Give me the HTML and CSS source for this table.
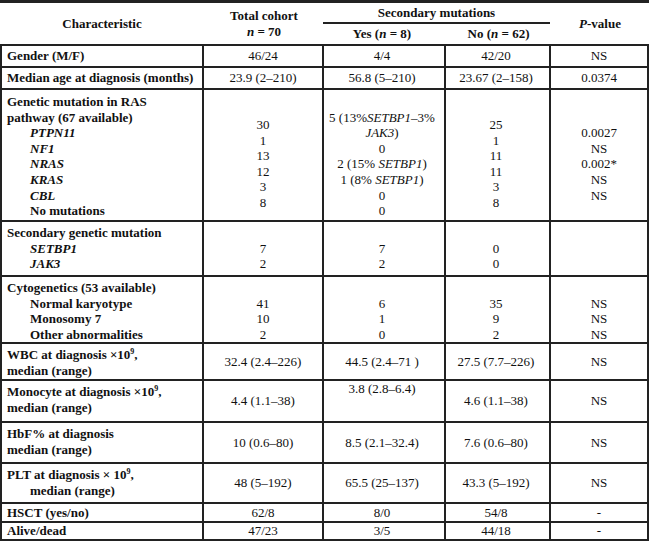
FILE: index.html
```html
<!DOCTYPE html>
<html lang="en">
<head>
<meta charset="utf-8">
<title>Patient characteristics</title>
<link rel="stylesheet" href="styles.css">
</head>
<body>
<div class="tbl">
  <div class="hd h-char"><div>Characteristic</div></div>
  <div class="hd h-total"><div>Total cohort</div><div><i>n</i> = 70</div></div>
  <div class="hd h-sec"><div>Secondary mutations</div></div>
  <div class="hd h-p"><div><i>P</i>-value</div></div>
  <div class="hd h-yes"><div>Yes (<i>n</i> = 8)</div></div>
  <div class="hd h-no"><div>No (<i>n</i> = 62)</div></div>

  <div class="cell lab">Gender (M/F)</div>
  <div class="cell">46/24</div>
  <div class="cell c3">4/4</div>
  <div class="cell c4">42/20</div>
  <div class="cell">NS</div>

  <div class="cell lab">Median age at diagnosis (months)</div>
  <div class="cell">23.9 (2–210)</div>
  <div class="cell c3">56.8 (5–210)</div>
  <div class="cell c4">23.67 (2–158)</div>
  <div class="cell">0.0374</div>

  <div class="cell lab top pt4">
    <div>Genetic mutation in RAS</div>
    <div>pathway (67 available)</div>
    <div class="ind"><i>PTPN11</i></div>
    <div class="ind"><i>NF1</i></div>
    <div class="ind"><i>NRAS</i></div>
    <div class="ind"><i>KRAS</i></div>
    <div class="ind"><i>CBL</i></div>
    <div class="ind">No mutations</div>
  </div>
  <div class="cell top pt27"><div>30</div><div>1</div><div>13</div><div>12</div><div>3</div><div>8</div></div>
  <div class="cell c3 top pt20"><div>5 (13%<i>SETBP1</i>–3%</div><div><i>JAK3</i>)</div><div>0</div><div>2 (15% <i>SETBP1</i>)</div><div>1 (8% <i>SETBP1</i>)</div><div>0</div><div>0</div></div>
  <div class="cell c4 top pt27"><div>25</div><div>1</div><div>11</div><div>11</div><div>3</div><div>8</div></div>
  <div class="cell top pt35"><div>0.0027</div><div>NS</div><div>0.002*</div><div>NS</div><div>NS</div></div>

  <div class="cell lab top pt3">
    <div>Secondary genetic mutation</div>
    <div class="ind"><i>SETBP1</i></div>
    <div class="ind"><i>JAK3</i></div>
  </div>
  <div class="cell top pt19"><div>7</div><div>2</div></div>
  <div class="cell c3 top pt19"><div>7</div><div>2</div></div>
  <div class="cell c4 top pt19"><div>0</div><div>0</div></div>
  <div class="cell"></div>

  <div class="cell lab top pt3">
    <div>Cytogenetics (53 available)</div>
    <div class="ind">Normal karyotype</div>
    <div class="ind">Monosomy 7</div>
    <div class="ind">Other abnormalities</div>
  </div>
  <div class="cell top pt19"><div>41</div><div>10</div><div>2</div></div>
  <div class="cell c3 top pt19"><div>6</div><div>1</div><div>0</div></div>
  <div class="cell c4 top pt19"><div>35</div><div>9</div><div>2</div></div>
  <div class="cell top pt19"><div>NS</div><div>NS</div><div>NS</div></div>

  <div class="cell lab top pt3 two">
    <div>WBC at diagnosis ×10<sup class="sup">9</sup>,</div>
    <div>median (range)</div>
  </div>
  <div class="cell">32.4 (2.4–226)</div>
  <div class="cell c3">44.5 (2.4–71 )</div>
  <div class="cell c4">27.5 (7.7–226)</div>
  <div class="cell">NS</div>

  <div class="cell lab top pt3 two">
    <div>Monocyte at diagnosis ×10<sup class="sup">9</sup>,</div>
    <div>median (range)</div>
  </div>
  <div class="cell">4.4 (1.1–38)</div>
  <div class="cell c3 top pt0">3.8 (2.8–6.4)</div>
  <div class="cell c4">4.6 (1.1–38)</div>
  <div class="cell">NS</div>

  <div class="cell lab top pt3 two">
    <div>HbF% at diagnosis</div>
    <div>median (range)</div>
  </div>
  <div class="cell">10 (0.6–80)</div>
  <div class="cell c3">8.5 (2.1–32.4)</div>
  <div class="cell c4">7.6 (0.6–80)</div>
  <div class="cell">NS</div>

  <div class="cell lab top pt3 two">
    <div>PLT at diagnosis × 10<sup class="sup">9</sup>,</div>
    <div class="ind">median (range)</div>
  </div>
  <div class="cell">48 (5–192)</div>
  <div class="cell c3">65.5 (25–137)</div>
  <div class="cell c4">43.3 (5–192)</div>
  <div class="cell">NS</div>

  <div class="cell lab">HSCT (yes/no)</div>
  <div class="cell">62/8</div>
  <div class="cell c3">8/0</div>
  <div class="cell c4">54/8</div>
  <div class="cell">-</div>

  <div class="cell lab">Alive/dead</div>
  <div class="cell">47/23</div>
  <div class="cell c3">3/5</div>
  <div class="cell c4">44/18</div>
  <div class="cell">-</div>
</div>
</body>
</html>
```

FILE: styles.css
```css
* {
  box-sizing: border-box;
}

body {
  margin: 0;
  background: #fff;
  color: #111;
  font-family: "Liberation Serif", "Times New Roman", serif;
  font-size: 13px;
  line-height: 15.6px;
}

.tbl {
  display: grid;
  width: 649px;
  grid-template-columns: 204px 120px 122px 105px 98px;
  grid-template-rows: 21px 22px 22px 22px 132px 55px 67px 37px 42px 41px 40px 19px 18px;
  border-top: 3px solid #222;
}

.hd {
  font-weight: bold;
  display: flex;
  flex-direction: column;
  justify-content: center;
  align-items: center;
  text-align: center;
  white-space: nowrap;
}

.h-char {
  grid-column: 1;
  grid-row: 1 / 3;
  border-bottom: 2px solid #222;
}

.h-total {
  grid-column: 2;
  grid-row: 1 / 3;
  border-bottom: 2px solid #222;
  line-height: 16px;
}

.h-sec {
  grid-column: 3 / 5;
  grid-row: 1;
  border-bottom: 2px solid #222;
  margin-right: 1px;
  margin-left: -1px;
}

.h-yes {
  grid-column: 3;
  grid-row: 2;
  border-bottom: 2px solid #222;
  padding-right: 6px;
}

.h-no {
  grid-column: 4;
  grid-row: 2;
  border-bottom: 2px solid #222;
}

.h-p {
  grid-column: 5;
  grid-row: 1 / 3;
  border-bottom: 2px solid #222;
}

.cell {
  border-right: 2px solid #222;
  border-bottom: 2px solid #222;
  display: flex;
  flex-direction: column;
  justify-content: center;
  text-align: center;
  padding: 0 2px;
  white-space: nowrap;
}

.lab {
  border-left: 2px solid #222;
  text-align: left;
  padding-left: 5px;
  font-weight: bold;
}

.top {
  justify-content: flex-start;
}

.pt0 { padding-top: 0; }
.pt3 { padding-top: 3px; }
.pt4 { padding-top: 4px; }
.pt19 { padding-top: 18.6px; }
.pt20 { padding-top: 19.6px; }
.pt27 { padding-top: 27px; }
.pt35 { padding-top: 35.2px; }

.two {
  line-height: 16px;
}

.ind {
  padding-left: 23px;
}

.c3 {
  padding-right: 6px;
}

.c4 {
  padding-right: 5px;
}

.sup {
  font-size: 8px;
  vertical-align: 5px;
  line-height: 0;
}
```
